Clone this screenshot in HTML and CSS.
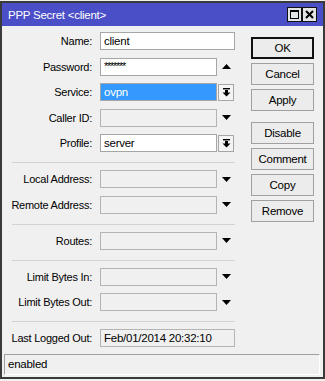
FILE: index.html
```html
<!DOCTYPE html>
<html lang="en">
<head>
  <meta charset="UTF-8">
  <meta name="viewport" content="width=device-width, initial-scale=1.0">
  <title>PPP Secret</title>
  <link rel="stylesheet" href="styles.css">
</head>
<body>
  <div class="window">
    <div class="titlebar">
      <span class="title">PPP Secret &lt;client&gt;</span>
      <div class="title-btns">
        <span class="tbtn">
          <svg width="9" height="9" viewBox="0 0 9 9"><rect x="0.5" y="0.5" width="8" height="8" fill="none" stroke="#000"/><rect x="0" y="0" width="9" height="2" fill="#000"/></svg>
        </span>
        <span class="tbtn">
          <svg width="9" height="9" viewBox="0 0 9 9"><path d="M1 1 L8 8 M8 1 L1 8" stroke="#000" stroke-width="2"/></svg>
        </span>
      </div>
    </div>

    <div class="content">
      <div class="form">
        <div class="group">
          <div class="row">
            <span class="lbl">Name:</span>
            <div class="field wide">client</div>
          </div>
          <div class="row">
            <span class="lbl">Password:</span>
            <div class="field pass">*******</div>
            <span class="ctl"><svg width="9" height="5" viewBox="0 0 9 5"><polygon points="0,5 9,5 4.5,0" fill="#000"/></svg></span>
          </div>
          <div class="row">
            <span class="lbl">Service:</span>
            <div class="field sel">ovpn</div>
            <span class="ctl"><span class="dd"><svg width="9" height="9" viewBox="0 0 9 9"><rect x="1" y="0" width="7" height="1.4" fill="#000"/><rect x="3" y="2" width="3" height="3" fill="#000"/><polygon points="0.5,4.5 8.5,4.5 4.5,8.5" fill="#000"/></svg></span></span>
          </div>
          <div class="row">
            <span class="lbl">Caller ID:</span>
            <div class="field off"></div>
            <span class="ctl"><svg width="9" height="5" viewBox="0 0 9 5"><polygon points="0,0 9,0 4.5,5" fill="#000"/></svg></span>
          </div>
          <div class="row">
            <span class="lbl">Profile:</span>
            <div class="field">server</div>
            <span class="ctl"><span class="dd"><svg width="9" height="9" viewBox="0 0 9 9"><rect x="1" y="0" width="7" height="1.4" fill="#000"/><rect x="3" y="2" width="3" height="3" fill="#000"/><polygon points="0.5,4.5 8.5,4.5 4.5,8.5" fill="#000"/></svg></span></span>
          </div>
        </div>

        <div class="sep"></div>

        <div class="group">
          <div class="row">
            <span class="lbl">Local Address:</span>
            <div class="field off"></div>
            <span class="ctl"><svg width="9" height="5" viewBox="0 0 9 5"><polygon points="0,0 9,0 4.5,5" fill="#000"/></svg></span>
          </div>
          <div class="row">
            <span class="lbl">Remote Address:</span>
            <div class="field off"></div>
            <span class="ctl"><svg width="9" height="5" viewBox="0 0 9 5"><polygon points="0,0 9,0 4.5,5" fill="#000"/></svg></span>
          </div>
        </div>

        <div class="sep"></div>

        <div class="group">
          <div class="row">
            <span class="lbl">Routes:</span>
            <div class="field off"></div>
            <span class="ctl"><svg width="9" height="5" viewBox="0 0 9 5"><polygon points="0,0 9,0 4.5,5" fill="#000"/></svg></span>
          </div>
        </div>

        <div class="sep"></div>

        <div class="group">
          <div class="row">
            <span class="lbl">Limit Bytes In:</span>
            <div class="field off"></div>
            <span class="ctl"><svg width="9" height="5" viewBox="0 0 9 5"><polygon points="0,0 9,0 4.5,5" fill="#000"/></svg></span>
          </div>
          <div class="row">
            <span class="lbl">Limit Bytes Out:</span>
            <div class="field off"></div>
            <span class="ctl"><svg width="9" height="5" viewBox="0 0 9 5"><polygon points="0,0 9,0 4.5,5" fill="#000"/></svg></span>
          </div>
        </div>

        <div class="sep"></div>

        <div class="group">
          <div class="row">
            <span class="lbl">Last Logged Out:</span>
            <div class="field wide off">Feb/01/2014 20:32:10</div>
          </div>
        </div>
      </div>

      <div class="actions">
        <button class="btn default">OK</button>
        <button class="btn">Cancel</button>
        <button class="btn">Apply</button>
        <button class="btn spaced">Disable</button>
        <button class="btn">Comment</button>
        <button class="btn">Copy</button>
        <button class="btn">Remove</button>
      </div>
    </div>

    <div class="status">enabled</div>
  </div>
</body>
</html>
```

FILE: styles.css
```css
body {
  margin: 0;
  padding: 0;
  background-color: #f0f0f0;
  font-family: "Liberation Sans", Arial, sans-serif;
  font-size: 11px;
  letter-spacing: -0.25px;
  color: #000;
}
.window {
  margin-top: 1px;
  width: 321px;
  height: 374px;
  border: 2px solid #3a3a3a;
  background-color: #f0f0f0;
  display: flex;
  flex-direction: column;
}
.titlebar {
  height: 23px;
  flex-shrink: 0;
  background-color: #4b4fc7;
  display: flex;
  align-items: center;
  justify-content: space-between;
  padding: 0 6px 0 6px;
}
.title {
  color: #fff;
  font-size: 11.5px;
}
.title-btns {
  display: flex;
}
.tbtn {
  width: 15px;
  height: 15px;
  box-sizing: border-box;
  border: 1px solid #111;
  background-color: #e4e4e4;
  display: flex;
  align-items: center;
  justify-content: center;
}
.content {
  flex: 1;
  display: flex;
  padding-top: 6px;
}
.form {
  width: 233px;
  display: flex;
  flex-direction: column;
}
.group {
  display: flex;
  flex-direction: column;
  gap: 7.5px;
}
.row {
  display: flex;
  align-items: center;
  height: 18px;
}
.lbl {
  width: 90px;
  margin-right: 8px;
  text-align: right;
  white-space: nowrap;
}
.field {
  width: 117px;
  height: 18px;
  box-sizing: border-box;
  border: 1px solid #a6a6a6;
  background-color: #fff;
  padding: 0 3px;
  line-height: 16px;
  white-space: nowrap;
  overflow: hidden;
  font-size: 11.5px;
}
.field.wide {
  width: 135px;
}
.field.off {
  background-color: #f0f0f0;
  border-color: #b4b4b4;
}
.field.sel {
  background-color: #3399ff;
  color: #fff;
}
.field.pass {
  font-size: 11px;
  letter-spacing: -1.3px;
  line-height: 14px;
}
.ctl {
  width: 18px;
  height: 18px;
  display: flex;
  align-items: center;
  justify-content: center;
}
.dd {
  width: 16px;
  height: 17px;
  box-sizing: border-box;
  border: 1px solid #a6a6a6;
  background-color: #f4f4f4;
  display: flex;
  align-items: center;
  justify-content: center;
}
.sep {
  margin: 10px 0 7px 10px;
  border-top: 1px solid #d3d3d3;
}
.actions {
  margin-left: 16px;
  padding-top: 5px;
  display: flex;
  flex-direction: column;
  gap: 4px;
}
.btn {
  width: 63px;
  height: 22px;
  box-sizing: border-box;
  border: 1px solid #a0a0a0;
  background-color: #ececec;
  font-family: "Liberation Sans", Arial, sans-serif;
  font-size: 11.5px;
  letter-spacing: -0.25px;
  color: #000;
  padding: 0;
  cursor: pointer;
}
.btn.default {
  border: 2px solid #111;
}
.btn.spaced {
  margin-top: 7px;
}
.status {
  height: 21px;
  flex-shrink: 0;
  margin: 0 3px 2px 2px;
  box-sizing: border-box;
  border-top: 1px solid #a0a0a0;
  border-left: 1px solid #a0a0a0;
  border-right: 1px solid #fff;
  border-bottom: 1px solid #fff;
  padding-left: 3px;
  line-height: 19px;
  font-size: 11.5px;
}
```
